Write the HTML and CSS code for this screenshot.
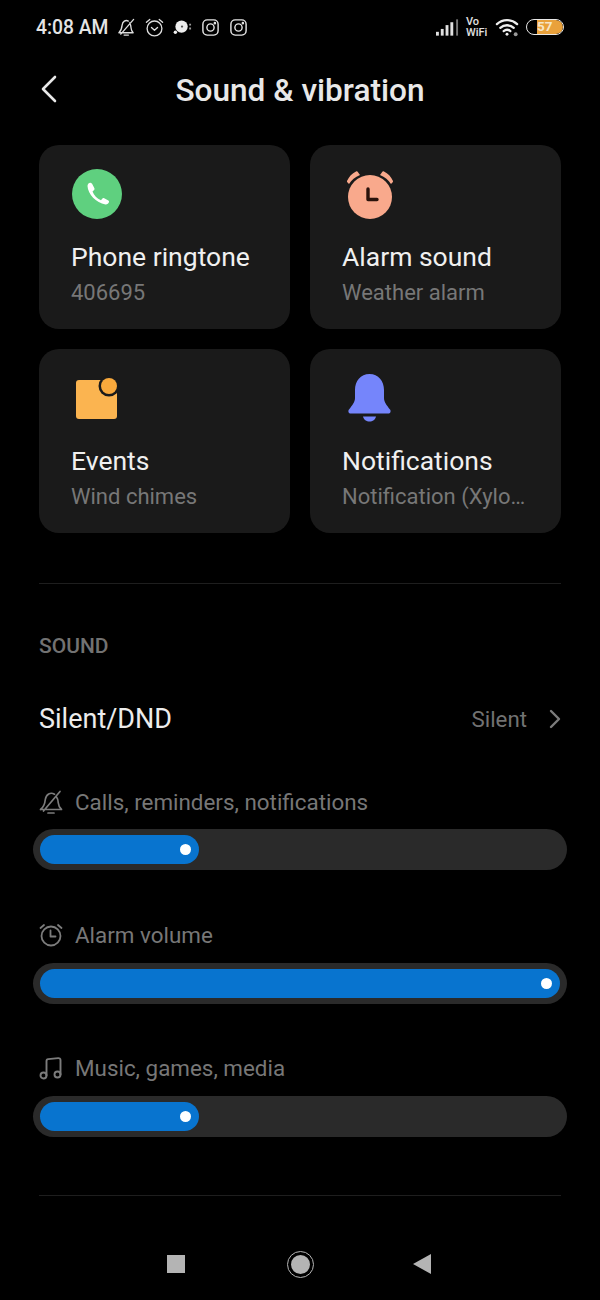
FILE: index.html
```html
<!DOCTYPE html>
<html lang="en">
<head>
    <meta charset="UTF-8">
    <meta name="viewport" content="width=device-width, initial-scale=1.0">
    <title>Sound &amp; vibration</title>
    <link rel="stylesheet" href="styles.css">
</head>
<body>
    <div class="status">
        <div class="status-left">
            <span class="time">4:08 AM</span>
            <svg class="st-icon" viewBox="0 0 20 20" fill="none" stroke="#ddd" stroke-width="1.4" stroke-linecap="round" stroke-linejoin="round"><path d="M2 15.500h15c-1.600-1.500-2-3-2.200-5-.2-2.300-.5-4-1.600-5.300M12 3.200C9 1.600 5.800 3.500 5.400 7.500c-.3 3-.6 5.500-3.400 8M7.500 18h4.500M17.500 1.500 4 17"/></svg>
            <svg class="st-icon" viewBox="0 0 20 20" fill="none" stroke="#ddd" stroke-width="1.4" stroke-linecap="round" stroke-linejoin="round"><circle cx="10" cy="11" r="7.800"/><path d="M6.800 10l3.200 3 3.200-3M1.500 4.500 5 1.500M18.500 4.500 15 1.500"/></svg>
            <svg class="st-icon" viewBox="0 0 20 20"><circle cx="9" cy="9" r="6.500" fill="#eee"/><circle cx="2.500" cy="15" r="1.800" fill="#eee"/><path d="M17 6h2v2h-2zM17 10h2v2h-2z" fill="#999"/><circle cx="9.500" cy="9" r="1.200" fill="#555"/></svg>
            <svg class="st-icon" viewBox="0 0 20 20" fill="none" stroke="#e6e6e6" stroke-width="1.500"><rect x="2" y="2" width="16" height="16" rx="4.500"/><circle cx="10" cy="10" r="3.800"/><circle cx="14.600" cy="5.400" r=".6" fill="#e6e6e6"/></svg>
            <svg class="st-icon" viewBox="0 0 20 20" fill="none" stroke="#e6e6e6" stroke-width="1.500"><rect x="2" y="2" width="16" height="16" rx="4.500"/><circle cx="10" cy="10" r="3.800"/><circle cx="14.600" cy="5.400" r=".6" fill="#e6e6e6"/></svg>
        </div>
        <div class="status-right">
            <svg class="signal" viewBox="0 0 24 17" fill="#e0e0e0"><rect x="0" y="13" width="3" height="4"/><rect x="5" y="10" width="3" height="7"/><rect x="10" y="6" width="3" height="11"/><rect x="15" y="3" width="3" height="14"/><rect x="21" y="0" width="2" height="17" fill="#777"/></svg>
            <span class="vowifi">Vo<br>WiFi</span>
            <svg class="wifi" viewBox="0 0 26 20" fill="none" stroke="#eee" stroke-width="2.400" stroke-linecap="round"><path d="M2 7c6-5.500 15-5.500 21 0M5.500 10.800c4-3.500 10-3.500 14 0M9 14.200c2-1.600 5-1.600 7 0"/><circle cx="12.500" cy="17.500" r="1.500" fill="#eee" stroke="none"/><circle cx="21.500" cy="17.500" r="2" fill="#999" stroke="none"/></svg>
            <div class="battery"><div class="battery-fill"></div><span class="battery-num">57</span></div>
        </div>
    </div>

    <div class="header">
        <svg class="back" viewBox="0 0 18 28" fill="none" stroke="#e8e8e8" stroke-width="2.600" stroke-linecap="round" stroke-linejoin="round"><path d="M15 2 3 14l12 12"/></svg>
        <h1 class="title">Sound &amp; vibration</h1>
    </div>

    <div class="cards">
        <div class="card">
            <svg class="card-icon" viewBox="0 0 52 52">
                <circle cx="26" cy="26" r="25" fill="#5fd07f"/>
                <path d="M19.500 14.500c-1.500.3-3 1.500-3 3.500 .4 8 8.500 17 18 18.500 1.800 .1 3-1 3.500-2.500.2-.7 0-1.200-.6-1.600l-4.200-2.200c-.7-.3-1.300-.2-1.800.4l-1.400 1.600c-4-1.600-7-5-8.500-8.800l1.600-1.400c.5-.5 .6-1.100 .3-1.700l-2.300-4.600c-.4-.6-.9-.8-1.600-.7z" fill="#fff"/>
            </svg>
            <div class="card-title">Phone ringtone</div>
            <div class="card-sub">406695</div>
        </div>
        <div class="card">
            <svg class="card-icon" viewBox="0 0 52 52">
                <g transform="translate(2 1)">
                    <circle cx="26" cy="28" r="22" fill="#f9a98c"/>
                    <path d="M3 12C5 7.500 8 4.500 12 2.500c1-.4 1.500 0 2 .7l2 2.800c-5 2-8.500 5-11 9L3.300 13.300c-.3-.4-.4-.8-.3-1.300zM49 12C47 7.500 44 4.500 40 2.500c-1-.4-1.500 0-2 .7l-2 2.800c5 2 8.500 5 11 9l1.700-1.700c.3-.4.4-.8.300-1.300z" fill="#f9a98c"/>
                    <path d="M24 20v10.500H33" fill="none" stroke="#2a120b" stroke-width="3.400" stroke-linecap="round" stroke-linejoin="round"/>
                </g>
            </svg>
            <div class="card-title">Alarm sound</div>
            <div class="card-sub">Weather alarm</div>
        </div>
        <div class="card">
            <svg class="card-icon" viewBox="0 0 52 52">
                <rect x="5" y="8" width="41" height="39" rx="3" fill="#fbb450"/>
                <circle cx="38" cy="14" r="10.500" fill="#1a1a1a"/>
                <circle cx="38" cy="14" r="8" fill="#f9a93c"/>
            </svg>
            <div class="card-title">Events</div>
            <div class="card-sub">Wind chimes</div>
        </div>
        <div class="card">
            <svg class="card-icon" viewBox="0 0 52 52">
                <path d="M27.500 2C18.500 2 13 9 13 18v8c0 4-2.500 7-6 11.500-1.200 1.500-.5 4 1.500 4h38c2 0 2.700-2.500 1.500-4-3.500-4.500-6-7.500-6-11.500v-8C42 9 36.500 2 27.500 2z" fill="#7585fb"/>
                <path d="M21 44.500h13c-.5 3-3.500 5-6.500 5s-6-2-6.500-5z" fill="#7585fb"/>
            </svg>
            <div class="card-title">Notifications</div>
            <div class="card-sub">Notification (Xylo…</div>
        </div>
    </div>

    <div class="divider divider-top"></div>

    <div class="section-label">SOUND</div>

    <div class="dnd-row">
        <span class="dnd-name">Silent/DND</span>
        <span class="dnd-value">Silent</span>
        <svg class="chev" viewBox="0 0 12 20" fill="none" stroke="#7c7c7c" stroke-width="2.400" stroke-linecap="round" stroke-linejoin="round"><path d="M2 2l8 8-8 8"/></svg>
    </div>

    <div class="volume">
        <div class="vol-label">
            <svg class="vol-icon" viewBox="0 0 24 24" fill="none" stroke="#7c7c7c" stroke-width="1.700" stroke-linecap="round" stroke-linejoin="round"><path d="M1.500 19.500h21c-2.200-2-3-4-3.200-6.500-.2-2.500-.6-4.500-1.800-6M15.500 4.200C11.500 1.800 7 4.300 6.300 9.500c-.4 4-.9 7-4.800 10M9 23h6M21 1.500 4.500 21"/></svg>
            <span>Calls, reminders, notifications</span>
        </div>
        <div class="track"><div class="fill fill-low"><span class="knob"></span></div></div>
    </div>

    <div class="volume">
        <div class="vol-label">
            <svg class="vol-icon" viewBox="0 0 24 24" fill="none" stroke="#7c7c7c" stroke-width="1.800" stroke-linecap="round" stroke-linejoin="round"><circle cx="12" cy="13" r="9.500"/><path d="M11.500 7.500V13.500H16.500M1.500 5 5 2M22.500 5 19 2"/></svg>
            <span>Alarm volume</span>
        </div>
        <div class="track"><div class="fill fill-full"><span class="knob"></span></div></div>
    </div>

    <div class="volume volume-last">
        <div class="vol-label">
            <svg class="vol-icon" viewBox="0 0 24 24" fill="none" stroke="#7c7c7c" stroke-width="1.900" stroke-linecap="round" stroke-linejoin="round"><circle cx="4.500" cy="19.500" r="3"/><circle cx="18.500" cy="18.500" r="3"/><path d="M7.500 19.500V5c0-1 .6-1.800 1.700-1.900l10-1c1.100-.1 2.300 .6 2.300 1.900v14.500"/></svg>
            <span>Music, games, media</span>
        </div>
        <div class="track"><div class="fill fill-low"><span class="knob"></span></div></div>
    </div>

    <div class="divider divider-bottom"></div>

    <div class="nav">
        <div class="nav-square"></div>
        <div class="nav-home"></div>
        <div class="nav-back"></div>
    </div>
</body>
</html>
```

FILE: styles.css
```css
* {
    box-sizing: border-box;
}
html, body {
    margin: 0;
    padding: 0;
}
body {
    width: 600px;
    height: 1300px;
    overflow: hidden;
    background-color: #000;
    font-family: Roboto, "Liberation Sans", sans-serif;
}

/* status bar */
.status {
    height: 55px;
    padding: 16px 36px 0 36px;
    display: flex;
    justify-content: space-between;
    align-items: flex-start;
}
.status-left {
    display: flex;
    align-items: center;
    height: 22px;
}
.time {
    font-size: 19.300px;
    font-weight: 500;
    color: #e4e4e4;
    margin-right: 9px;
}
.st-icon {
    width: 19px;
    height: 19px;
    margin-right: 9px;
}
.status-right {
    display: flex;
    align-items: center;
    height: 22px;
}
.signal {
    width: 23px;
    height: 17px;
    margin-right: 7px;
}
.vowifi {
    font-size: 11px;
    line-height: 11px;
    font-weight: 500;
    color: #e0e0e0;
    width: 23px;
    margin-right: 6px;
}
.wifi {
    width: 25px;
    height: 20px;
    margin-right: 6px;
}
.battery {
    width: 38px;
    height: 16px;
    border: 1.500px solid #e8e8e8;
    border-radius: 8px;
    position: relative;
    overflow: hidden;
}
.battery-fill {
    width: 72%;
    height: 100%;
    margin-left: 28%;
    background-color: #e9a13b;
    border-radius: 0 7px 7px 0;
}
.battery-num {
    position: absolute;
    left: 10px;
    top: 0;
    font-size: 13.500px;
    line-height: 13px;
    font-weight: 700;
    color: #f6e6c8;
}

/* header */
.header {
    height: 70px;
    position: relative;
    display: flex;
    align-items: center;
    justify-content: center;
}
.back {
    position: absolute;
    left: 40px;
    top: 20px;
    width: 18px;
    height: 28px;
}
.title {
    margin: 0;
    font-size: 31.600px;
    font-weight: 500;
    color: #e8e8e8;
}

/* sound cards */
.cards {
    margin: 20px 39px 0 39px;
    display: grid;
    grid-template-columns: 251px 251px;
    grid-auto-rows: 184px;
    gap: 20px;
}
.card {
    background-color: #1a1a1a;
    border-radius: 20px;
    padding: 23px 20px 0 32px;
}
.card-icon {
    display: block;
    width: 52px;
    height: 52px;
}
.card-title {
    margin-top: 20px;
    font-size: 26.500px;
    line-height: 34px;
    color: #f0f0f0;
    white-space: nowrap;
}
.card-sub {
    margin-top: 4px;
    font-size: 22px;
    line-height: 30px;
    color: #777;
    white-space: nowrap;
}

.divider {
    height: 1px;
    margin: 0 39px;
    background-color: #1e1e1e;
}
.divider-top {
    margin-top: 50px;
}
.section-label {
    margin: 50px 39px 0 39px;
    font-size: 21px;
    line-height: 24px;
    font-weight: 500;
    color: #727272;
}

/* silent row */
.dnd-row {
    margin: 44px 39px 0 39px;
    height: 34px;
    display: flex;
    align-items: center;
}
.dnd-name {
    flex: 1;
    font-size: 27px;
    color: #ececec;
}
.dnd-value {
    font-size: 22.300px;
    color: #727272;
}
.chev {
    width: 12px;
    height: 20px;
    margin-left: 22px;
}

/* volume sliders */
.volume {
    margin-top: 51px;
}
.volume-last.volume {
    margin-top: 50px;
}
.vol-label {
    margin-left: 39px;
    height: 30px;
    display: flex;
    align-items: center;
    font-size: 22.400px;
    color: #777;
}
.volume + .volume .vol-label {
    padding-bottom: 2px;
}
.vol-icon {
    width: 24px;
    height: 24px;
    margin-right: 12px;
}
.track {
    margin: 12px 33px 0 33px;
    height: 41px;
    padding: 6px 7px;
    background-color: #2a2a2a;
    border-radius: 21px;
}
.fill {
    height: 29px;
    background-color: #0874cf;
    border-radius: 15px;
    position: relative;
}
.fill-low {
    width: 159px;
}
.fill-full {
    width: 100%;
}
.knob {
    position: absolute;
    right: 8px;
    top: 9px;
    width: 11px;
    height: 11px;
    border-radius: 50%;
    background-color: #fff;
}

.divider-bottom {
    margin-top: 58px;
}

/* nav keys */
.nav {
    position: relative;
    height: 100px;
}
.nav-square {
    position: absolute;
    left: 167px;
    top: 59px;
    width: 18px;
    height: 18px;
    background-color: #b4b4b4;
}
.nav-home {
    position: absolute;
    left: 287px;
    top: 55px;
    width: 27px;
    height: 27px;
    border-radius: 50%;
    background-color: #b4b4b4;
    border: 4px solid #000;
    outline: 1.500px solid #b4b4b4;
    outline-offset: -1.500px;
}
.nav-back {
    position: absolute;
    left: 413px;
    top: 58px;
    width: 18px;
    height: 20px;
    background-color: #b4b4b4;
    clip-path: polygon(100% 0, 100% 100%, 0 50%);
}
```
